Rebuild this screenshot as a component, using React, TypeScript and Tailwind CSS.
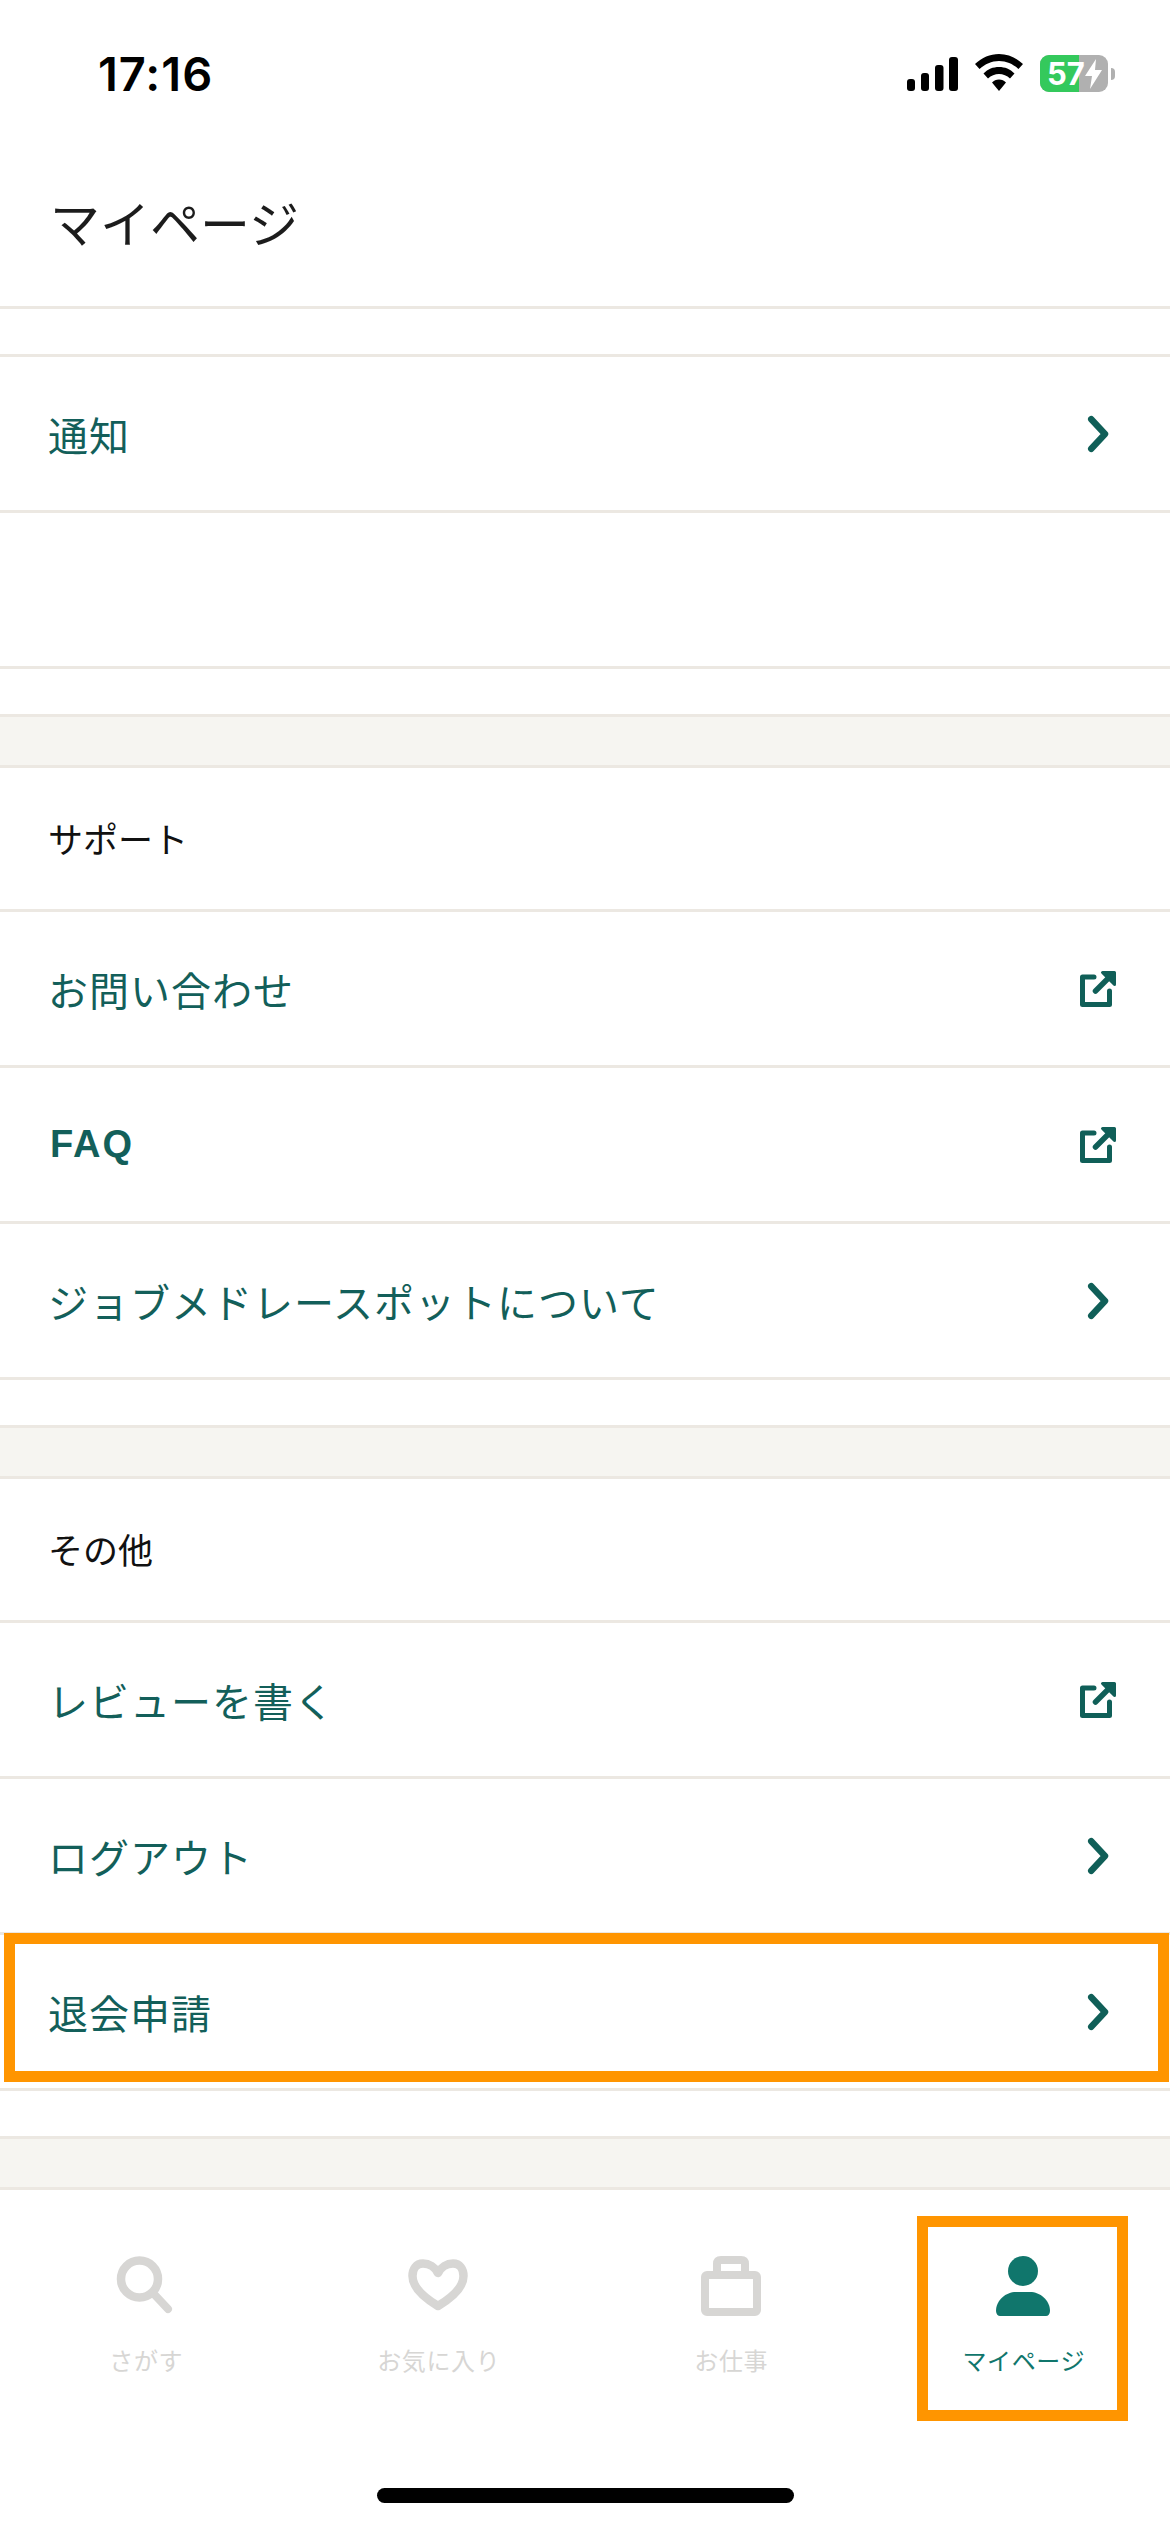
import { Fragment } from "react";

const jp = "font-['Noto_Sans_CJK_JP','Noto_Sans_CJK_SC',sans-serif]";

function Chevron() {
  return (
    <svg width="36" height="44" viewBox="0 0 36 44" fill="none" className="shrink-0">
      <path d="M11.25 7.25 L25 22 L11.25 36.75" stroke="#105f58" strokeWidth="6.5" strokeLinecap="round" strokeLinejoin="round" />
    </svg>
  );
}

function ExternalLink() {
  return (
    <svg width="36" height="38" viewBox="0 0 36 38" fill="none" className="shrink-0">
      <path d="M14 7 H2.500 V34.500 H29.500 V21" stroke="#105f58" strokeWidth="5" strokeLinecap="round" strokeLinejoin="round" />
      <path d="M15.500 21 L31 5.500" stroke="#105f58" strokeWidth="5.500" strokeLinecap="round" />
      <path d="M22.500 2.500 H34.500 V14.500 Z" fill="#105f58" stroke="#105f58" strokeWidth="3" strokeLinejoin="round" />
    </svg>
  );
}

function Row({ label, icon, latin }: { label: string; icon: "chevron" | "external"; latin?: boolean }) {
  return (
    <div className="h-[156px] border-b-[3px] border-[#ece8e2] flex items-center justify-between pl-[48px] pr-[54px]">
      {latin ? (
        <span className="font-['Liberation_Sans',sans-serif] font-bold text-[38px] tracking-[2px] pl-[2px] text-[#135f5a]">{label}</span>
      ) : (
        <span className={`${jp} text-[40px] tracking-[1px] text-[#135f5a]`}>{label}</span>
      )}
      {icon === "chevron" ? <Chevron /> : <ExternalLink />}
    </div>
  );
}

function Divider() {
  return (
    <Fragment>
      <div className="h-[48px] border-b-[3px] border-[#ece8e2]" />
      <div className="h-[51px] bg-[#f6f5f1] border-b-[3px] border-[#ece8e2]" />
    </Fragment>
  );
}

function SectionHead({ label }: { label: string }) {
  return (
    <div className="h-[144px] border-b-[3px] border-[#ece8e2] flex items-center pl-[48px]">
      <span className={`${jp} text-[35px] text-[#111]`}>{label}</span>
    </div>
  );
}

function StatusBar() {
  return (
    <div className="h-[120px] flex justify-between pl-[98px] pr-[55px] pt-[48px]">
      <span className="font-['Inter',sans-serif] font-semibold text-[47px] leading-[52px] text-black tracking-[1px]">17:16</span>
      <div className="flex items-start gap-[17px] pt-[9px]">
        <svg width="51" height="34" viewBox="0 0 51 34" fill="#000">
          <rect x="0" y="22" width="8" height="12" rx="3" />
          <rect x="14" y="16" width="8" height="18" rx="3" />
          <rect x="28" y="8" width="8.500" height="26" rx="3" />
          <rect x="42" y="0" width="9" height="34" rx="3" />
        </svg>
        <svg width="48" height="37" viewBox="0 0 48 37" fill="#000" className="-mt-[3px]">
          <path d="M24 0 C33 0 41 3.500 48 10 L43.500 15 C38 10 31.500 7 24 7 C16.500 7 10 10 4.500 15 L0 10 C7 3.500 15 0 24 0 Z" />
          <path d="M24 13 C30 13 35 15 39.500 19.500 L35 24.500 C32 21.500 28 20 24 20 C20 20 16 21.500 13 24.500 L8.500 19.500 C13 15 18 13 24 13 Z" />
          <path d="M24 25.500 C27 25.500 29 26.500 31 28.500 L24 37 L17 28.500 C19 26.500 21 25.500 24 25.500 Z" />
        </svg>
        <div className="relative flex items-center -mt-[2px]">
          <div className="relative w-[68px] h-[37px] rounded-[9px] overflow-hidden bg-[#b0b0b0] flex items-center">
            <div className="w-[39px] h-full bg-[#34c95c]" />
            <span className="absolute left-[7px] top-0 font-['Inter',sans-serif] font-bold text-[31px] leading-[37px] text-white">57</span>
            <svg width="18" height="30" viewBox="0 0 18 30" fill="#fff" className="absolute left-[45px] top-[4px]">
              <path d="M11 0 L0 17 H7 L5 30 L17 11 H10 Z" />
            </svg>
          </div>
          <div className="w-[4px] h-[12px] ml-[3px] rounded-r-full bg-[#b0b0b0]" />
        </div>
      </div>
    </div>
  );
}

const tabs = [
  { label: "さがす", icon: "search" },
  { label: "お気に入り", icon: "heart" },
  { label: "お仕事", icon: "work" },
  { label: "マイページ", icon: "person" },
];

function TabIcon({ name }: { name: string }) {
  if (name === "search") {
    return (
      <svg width="60" height="60" viewBox="0 0 60 60" fill="none">
        <circle cx="23.500" cy="23" r="18.500" stroke="#d7d6d4" strokeWidth="8.500" />
        <path d="M37 37 L52 53" stroke="#d7d6d4" strokeWidth="8" strokeLinecap="round" />
      </svg>
    );
  }
  if (name === "heart") {
    return (
      <svg width="60" height="60" viewBox="0 0 60 60" fill="none" className="overflow-visible">
        <path
          d="M29 17 C26 11 20 7.500 14 7.500 C7 7.500 3.500 13.500 3.500 20 C3.500 33 19 44 29 50 C39 44 54.500 33 54.500 20 C54.500 13.500 51 7.500 44 7.500 C38 7.500 32 11 29 17 Z"
          stroke="#d7d6d4"
          strokeWidth="8.500"
          strokeLinejoin="round"
        />
      </svg>
    );
  }
  if (name === "work") {
    return (
      <svg width="60" height="60" viewBox="0 0 60 60" fill="none">
        <path d="M16 15 V8 Q16 4 20 4 H40 Q44 4 44 8 V15" stroke="#d7d6d4" strokeWidth="8" />
        <rect x="4" y="19" width="52" height="37" rx="2" stroke="#d7d6d4" strokeWidth="8" />
      </svg>
    );
  }
  return (
    <svg width="60" height="60" viewBox="0 0 60 60" fill="#10766c">
      <circle cx="29" cy="15" r="15" />
      <path d="M2 55 C2 44 12 36 22 36 H36 C46 36 56 44 56 55 C56 58 54 60 52 60 H6 C4 60 2 58 2 55 Z" />
    </svg>
  );
}

function TabBar() {
  return (
    <div className="relative">
      <div className="grid grid-cols-4 pt-[66px]">
        {tabs.map((t) => (
          <div key={t.label} className="flex flex-col items-center">
            <TabIcon name={t.icon} />
            <span className={`${jp} mt-[26px] text-[24px] tracking-[0.6px] leading-[36px] ${t.icon === "person" ? "text-[#10766c]" : "text-[#d7d6d4]"}`}>
              {t.label}
            </span>
          </div>
        ))}
      </div>
      <div className="absolute left-[917px] top-[26px] w-[211px] h-[205px] border-[11px] border-[#ff9500]" />
    </div>
  );
}

export default function App() {
  return (
    <div className="w-[1170px] h-[2532px] bg-white flex flex-col overflow-hidden">
      <StatusBar />
      <div className="h-[189px] border-b-[3px] border-[#ece8e2] flex items-center pl-[50px] pt-[16px]">
        <h1 className={`${jp} text-[50px] text-[#1c1c1c] font-normal`}>マイページ</h1>
      </div>
      <div className="h-[48px] border-b-[3px] border-[#ece8e2]" />
      <Row label="通知" icon="chevron" />
      <div className="h-[156px] border-b-[3px] border-[#ece8e2]" />
      <Divider />
      <SectionHead label="サポート" />
      <Row label="お問い合わせ" icon="external" />
      <Row label="FAQ" icon="external" latin />
      <Row label="ジョブメドレースポットについて" icon="chevron" />
      <Divider />
      <SectionHead label="その他" />
      <Row label="レビューを書く" icon="external" />
      <Row label="ログアウト" icon="chevron" />
      <div className="relative">
        <Row label="退会申請" icon="chevron" />
        <div className="absolute left-[4px] -top-[2px] w-[1165px] h-[149px] border-[11px] border-[#ff9500]" />
      </div>
      <Divider />
      <TabBar />
      <div className="mt-auto mb-[29px] mx-auto w-[417px] h-[15px] rounded-full bg-black" />
    </div>
  );
}
